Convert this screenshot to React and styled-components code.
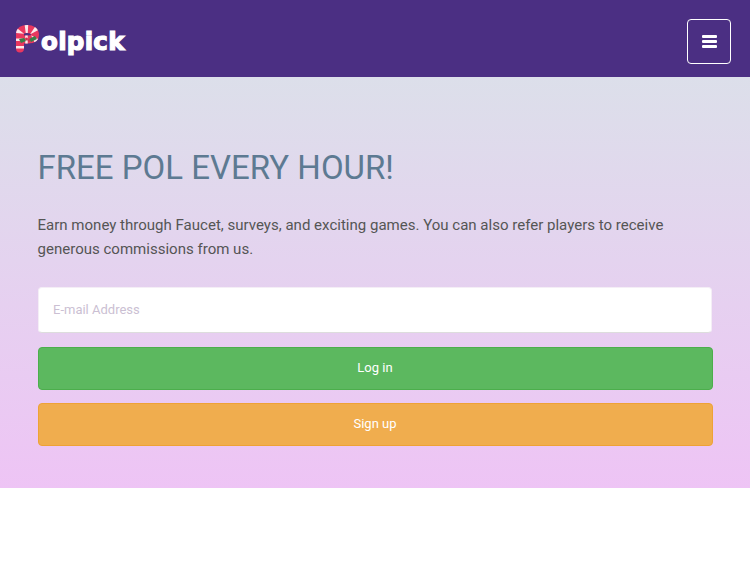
import React from "react";
import styled, { createGlobalStyle } from "styled-components";

const Global = createGlobalStyle`
  html, body {
    margin: 0;
    padding: 0;
    background: #fff;
    font-family: Roboto, "Liberation Sans", sans-serif;
  }
  * {
    box-sizing: border-box;
  }
`;

const Header = styled.header`
  height: 77px;
  background: #4b2f83;
  display: flex;
  align-items: center;
  justify-content: space-between;
  padding: 6px 19px 0 15px;
`;

const Logo = styled.a`
  display: flex;
  align-items: center;
  text-decoration: none;
  height: 34px;
  margin-top: -3px;
`;

const LogoText = styled.span`
  font-family: "DejaVu Sans", "Lato", sans-serif;
  font-weight: 700;
  font-size: 24.5px;
  letter-spacing: 0.3px;
  color: #fff;
  margin-left: 1px;
  margin-top: 3px;
  -webkit-text-stroke: 1.2px #fff;
`;

const MenuButton = styled.button`
  width: 44px;
  height: 45px;
  background: transparent;
  border: 1px solid #fff;
  border-radius: 4px;
  padding: 0;
  display: flex;
  align-items: center;
  justify-content: center;
  flex-direction: column;
  gap: 2px;
`;

const MenuBar = styled.span`
  display: block;
  width: 15px;
  height: 3px;
  background: #fff;
  border-radius: 1px;
`;

const Hero = styled.section`
  height: 411px;
  padding: 71px 37.5px 0;
  background: linear-gradient(to bottom, #dcdfea, #eec4f5);
`;

const Title = styled.h1`
  margin: 0 0 26px;
  font-size: 33px;
  line-height: 40px;
  font-weight: 400;
  color: #5d7a92;
`;

const Lead = styled.p`
  margin: 0 0 26px;
  font-size: 15.04px;
  line-height: 23.5px;
  color: #555;
  max-width: 640px;
`;

const Form = styled.form`
  display: flex;
  flex-direction: column;
`;

const EmailInput = styled.input`
  height: 46px;
  margin: 0 0.5px 14px;
  padding: 0 14px 1px;
  border: 1px solid #f4eef6;
  border-bottom-color: #ddd;
  border-radius: 4px;
  background: #fff;
  font-family: inherit;
  font-size: 13px;
  outline: none;
  &::placeholder {
    color: #cbbfd3;
    opacity: 1;
  }
`;

const ActionButton = styled.button`
  height: 43px;
  margin-bottom: 13px;
  border: 1px solid ${p => p.$border};
  border-radius: 4px;
  background: ${p => p.$bg};
  color: #fff;
  font-family: inherit;
  font-size: 13px;
  padding: 0 0 2px;
`;

const Footer = styled.div`
  height: 75px;
  background: #fff;
`;

const caneLine = "M5 24.5 V10 C5 6.5 8 5 12 5 C17 5 20 7 20 11 C20 14.5 17 15.5 13 15.5 H8";

function CandyP() {
  return (
    <svg width="25" height="32" viewBox="0 0 25 32" aria-hidden="true">
      <path d={caneLine} fill="none" stroke="#e9375f" strokeWidth="8" strokeLinecap="round" />
      <path d={caneLine} fill="none" stroke="#fbe9ec" strokeWidth="8" strokeDasharray="2.5 5" />
      <path d="M4 15 l5 -1 l2 3 l-5 2 z" fill="#3a7d48" />
      <path d="M14 15 l6 -3 l2 3 l-6 3 z" fill="#3a7d48" />
      <circle cx="11.5" cy="15" r="1.5" fill="#c9304f" />
      <circle cx="14" cy="16.5" r="1.3" fill="#c9304f" />
    </svg>
  );
}

export default function App() {
  return (
    <>
      <Global />
      <Header>
        <Logo href="#" aria-label="Polpick">
          <CandyP />
          <LogoText>olpick</LogoText>
        </Logo>
        <MenuButton type="button" aria-label="Menu">
          <MenuBar />
          <MenuBar />
          <MenuBar />
        </MenuButton>
      </Header>
      <Hero>
        <Title>FREE POL EVERY HOUR!</Title>
        <Lead>
          Earn money through Faucet, surveys, and exciting games. You can also refer players to receive generous
          commissions from us.
        </Lead>
        <Form onSubmit={e => e.preventDefault()}>
          <EmailInput type="email" placeholder="E-mail Address" />
          <ActionButton type="submit" $bg="#5cb85f" $border="#4cae4c">
            Log in
          </ActionButton>
          <ActionButton type="button" $bg="#f0ad4e" $border="#eea236">
            Sign up
          </ActionButton>
        </Form>
      </Hero>
      <Footer />
    </>
  );
}
